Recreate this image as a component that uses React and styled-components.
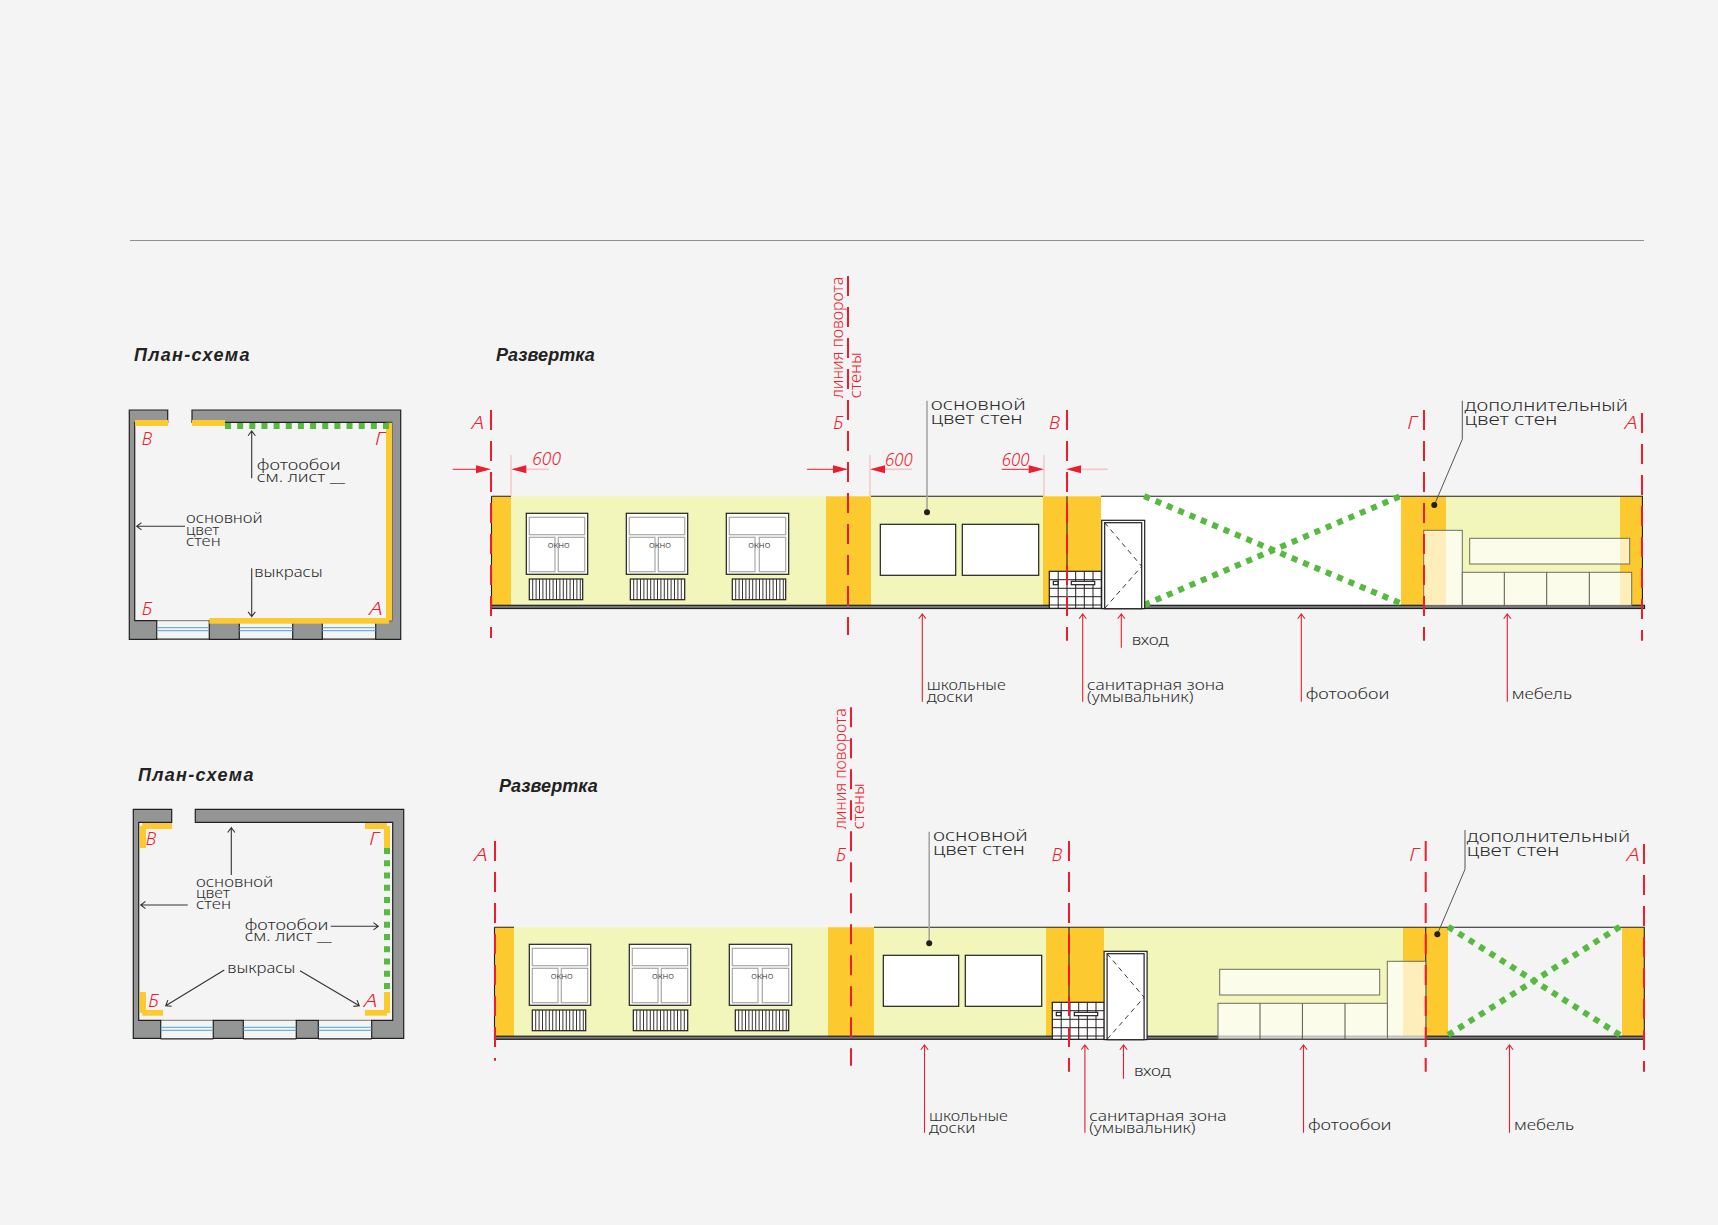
import styled, { createGlobalStyle } from "styled-components";

const RED = "#ed1c2e";
const ORANGE = "#fcc92e";
const PALE = "#f2f6bb";
const GREEN = "#55bb3f";
const WALL = "#939695";
const INK = "#231f20";
const PAPER = "#f4f4f4";

const GlobalStyle = createGlobalStyle`
  html, body {
    margin: 0;
    background: ${PAPER};
  }
`;

const Page = styled.div`
  width: 1718px;
  height: 1225px;
  overflow: hidden;
  padding-top: 240px;
  box-sizing: border-box;
  background: ${PAPER};
  font-family: "Noto Sans", "Liberation Sans", sans-serif;
`;

const Rule = styled.hr`
  height: 1px;
  margin: 0 74px 33px 130px;
  border: 0;
  background: #8f8f8f;
`;

const Row = styled.section`
  display: grid;
  grid-template-columns: 325px 1230px;
  height: 431px;
  padding-left: 125px;
`;

const PlanColumn = styled.div`
  display: flex;
  flex-direction: column;
  padding-top: ${(p) => p.$top}px;
`;

const Title = styled.h2`
  margin: 0;
  height: 22px;
  font-family: "Liberation Sans", "Noto Sans", sans-serif;
  font-size: 18px;
  line-height: 22px;
  font-weight: 700;
  font-style: italic;
  color: #222;
  white-space: nowrap;
`;

const PlanTitle = styled(Title)`
  padding-left: ${(p) => p.$left}px;
  margin-bottom: ${(p) => p.$gap}px;
  letter-spacing: 1.3px;
`;

const ElevationColumn = styled.div`
  display: grid;
`;

const ElevationTitle = styled(Title)`
  grid-area: 1 / 1;
  margin: 70px 0 0 ${(p) => p.$left}px;
  letter-spacing: 0.1px;
  z-index: 1;
`;

const Drawing = styled.svg`
  display: block;
  grid-area: 1 / 1;
  overflow: visible;
`;

const Note = styled.text`
  font-family: "Noto Sans", "Liberation Sans", sans-serif;
  font-weight: 300;
  font-size: ${(p) => p.$size || 15}px;
  fill: ${(p) => (p.$red ? RED : "#2b2b2b")};
`;

const Mark = styled.text`
  font-family: "Noto Sans", "Liberation Sans", sans-serif;
  font-style: italic;
  font-weight: 300;
  font-size: ${(p) => p.$size || 19}px;
  fill: ${RED};
`;

const SectionLine = styled.line`
  stroke: ${RED};
  stroke-width: 2;
  stroke-dasharray: 20 11;
`;

const Thin = styled.path`
  fill: none;
  stroke: ${(p) => p.$color || "#333"};
  stroke-width: ${(p) => p.$w || 1};
`;

const DashedThin = styled(Thin)`
  stroke-dasharray: 5 4;
`;

const Paint = styled.rect`
  fill: ${(p) => p.$fill};
`;

const Outlined = styled.rect`
  fill: ${(p) => p.$fill || "#fff"};
  stroke: ${(p) => p.$stroke || INK};
  stroke-width: ${(p) => p.$w || 1.2};
`;

const Furniture = styled.rect`
  fill: rgba(255, 255, 255, 0.68);
  stroke: #6f6f62;
  stroke-width: 1;
`;

const GreenDash = styled.line`
  stroke: ${GREEN};
  stroke-width: 6;
`;

const Dot = styled.circle`
  fill: ${INK};
`;

const Solid = styled.polygon`
  fill: ${RED};
`;

const Walls = styled.path`
  fill: ${WALL};
  stroke: ${INK};
  stroke-width: 1.2;
`;

const Glass = styled.path`
  fill: none;
  stroke: #4da3dc;
  stroke-width: 1;
`;

function Label({ x, y, w, size, red, children }) {
  return (
    <Note x={x} y={y} textLength={w} lengthAdjust="spacingAndGlyphs" $size={size} $red={red}>
      {children}
    </Note>
  );
}

function Letter({ x, y, w, children }) {
  return (
    <Mark x={x} y={y} textLength={w} lengthAdjust="spacingAndGlyphs">
      {children}
    </Mark>
  );
}

// line with an open head, tail -> tip
function Arrow({ x1, y1, x2, y2, color, head = 6 }) {
  const a = Math.atan2(y2 - y1, x2 - x1);
  const hx = (t) => x2 - head * Math.cos(a + t);
  const hy = (t) => y2 - head * Math.sin(a + t);
  const d = `M${x1} ${y1}L${x2} ${y2}M${hx(0.65)} ${hy(0.65)}L${x2} ${y2}L${hx(-0.65)} ${hy(-0.65)}`;
  return <Thin d={d} $color={color} $w={1.1} />;
}

// row of green squares, whole squares at both ends
function GreenRun({ x1, y1, x2, y2 }) {
  const len = Math.hypot(x2 - x1, y2 - y1);
  const step = len / Math.round(len / 12.3);
  const ux = (x2 - x1) / len;
  const uy = (y2 - y1) / len;
  return (
    <GreenDash
      x1={x1 - 3 * ux}
      y1={y1 - 3 * uy}
      x2={x2 + 3 * ux}
      y2={y2 + 3 * uy}
      strokeDasharray={`6 ${step - 6}`}
    />
  );
}

function Dim({ tip, base, y = 469.3, tail, pale }) {
  return (
    <>
      <Thin d={`M${base} ${y}L${tail} ${y}`} $color={pale ? "#f6c4c4" : RED} $w={pale ? 1.6 : 1} />
      <Solid points={`${tip},${y} ${base},${y - 4} ${base},${y + 4}`} />
    </>
  );
}

function Window({ x, w = 61.4, y = 513.3, rx, rw, lx }) {
  const bars = [];
  for (let b = rx + 3.4; b < rx + rw - 1; b += 3.4) bars.push(`M${b} ${y + 65.7}V${y + 86.4}`);
  return (
    <>
      <Outlined x={x} y={y} width={w} height={61} />
      <Outlined x={x + 3} y={y + 4} width={w - 6} height={17.4} $stroke="#a8a8a8" />
      <Outlined x={x + 3} y={y + 24} width={25.7} height={34.4} $stroke="#a8a8a8" />
      <Outlined x={x + w - 29.4} y={y + 24} width={26.4} height={34.4} $stroke="#a8a8a8" />
      <Label x={lx} y={y + 34.4} w={22} size={9.5}>
        окно
      </Label>
      <Outlined x={rx} y={y + 65.7} width={rw} height={20.7} />
      <Thin d={bars.join("")} $color={INK} $w={0.9} />
    </>
  );
}

function Door({ dx = 0, dy = 0 }) {
  const x = 1101.7 + dx;
  const y = 520.3 + dy;
  return (
    <>
      <Outlined x={x} y={y} width={43} height={88.3} />
      <Outlined x={x + 3} y={y + 2.4} width={37} height={86} />
      <DashedThin d={`M${x + 3} ${y + 2.4}L${x + 40} ${y + 46}L${x + 3} ${y + 88}`} $color={INK} $w={0.9} />
    </>
  );
}

function Washbasin({ dx = 0, dy = 0 }) {
  const x = 1049.3 + dx;
  const y = 571.3 + dy;
  const cols = [8.9, 17.7, 26.4, 35, 43.7].map((c) => `M${x + c} ${y}V${y + 37}`);
  const rows = [8.4, 17, 25.4, 33.7].map((r) => `M${x} ${y + r}H${x + 52}`);
  return (
    <>
      <Outlined x={x} y={y} width={52} height={37} />
      <Thin d={cols.join("") + rows.join("")} $color={INK} $w={1} />
      <Outlined x={x + 4} y={y + 10} width={4.7} height={3.4} />
      <Outlined x={x + 22} y={y + 10} width={23.4} height={3.4} />
    </>
  );
}

// notes and arrows common to both elevations, the second one sits a bit lower and to the right
function Callouts({ dx = 0, dy = 0 }) {
  return (
    <>
      <Thin d={`M${927 + dx} ${400.7 + dy}V${512.3 + dy}`} $color="#a5a5a5" $w={1.6} />
      <Dot cx={927 + dx} cy={512.3 + dy} r={3} />
      <Label x={930.7 + dx} y={410 + dy} w={95} size={17}>
        основной
      </Label>
      <Label x={930.7 + dx} y={424 + dy} w={92} size={17}>
        цвет стен
      </Label>
      <Arrow x1={922.3 + dx} y1={701.7 + dy} x2={922.3 + dx} y2={614 + dy} color={RED} />
      <Label x={926.7 + dx} y={690 + dy} w={79}>
        школьные
      </Label>
      <Label x={926.7 + dx} y={701.7 + dy} w={46.5}>
        доски
      </Label>
      <Arrow x1={1082.7 + dx} y1={701.7 + dy} x2={1082.7 + dx} y2={614 + dy} color={RED} />
      <Label x={1087 + dx} y={690 + dy} w={137.3}>
        санитарная зона
      </Label>
      <Label x={1087 + dx} y={701.7 + dy} w={106.3}>
        (умывальник)
      </Label>
      <Arrow x1={1121.3 + dx} y1={647.7 + dy} x2={1121.3 + dx} y2={614 + dy} color={RED} />
      <Label x={1131.7 + dx} y={645 + dy} w={37}>
        вход
      </Label>
      <Arrow x1={1301.3 + dx} y1={701.7 + dy} x2={1301.3 + dx} y2={614 + dy} color={RED} />
      <Label x={1305.7 + dx} y={699.3 + dy} w={83.6}>
        фотообои
      </Label>
      <Arrow x1={1507.3 + dx} y1={701.7 + dy} x2={1507.3 + dx} y2={614 + dy} color={RED} />
      <Label x={1511.7 + dx} y={699.3 + dy} w={60.3}>
        мебель
      </Label>
      <Label x={1464 + dx + 0.6} y={410.7 + dy} w={163.3} size={17}>
        дополнительный
      </Label>
      <Label x={1464 + dx + 0.6} y={424.7 + dy} w={92.7} size={17}>
        цвет стен
      </Label>
    </>
  );
}

function Windows({ dx = 0, dy = 0 }) {
  return (
    <>
      <Window x={526.3 + dx} y={513.3 + dy} rx={529.3 + dx} rw={53.4} lx={547.7 + dx} />
      <Window x={626.3 + dx} y={513.3 + dy} rx={630.3 + dx} rw={54.4} lx={649 + dx} />
      <Window x={726.3 + dx} w={62.4} y={513.3 + dy} rx={732.3 + dx} rw={53.4} lx={748.3 + dx} />
      <Outlined x={880.3 + dx} y={524.3 + dy} width={75.4} height={51} />
      <Outlined x={962.3 + dx} y={524.3 + dy} width={76.4} height={51} />
    </>
  );
}

function Furnishing({ tall, shelf, lower, top, bottom }) {
  return (
    <>
      <Furniture x={tall} y={top} width={38.6} height={bottom - top} />
      <Furniture x={shelf} y={top + 8} width={160} height={25.7} />
      <Furniture x={lower} y={top + 42} width={169.4} height={bottom - top - 42} />
      <Thin
        d={[42, 84.4, 127].map((s) => `M${lower + s} ${top + 42}V${bottom}`).join("")}
        $color="#55554c"
      />
    </>
  );
}

function WindowSlot({ x, w, y }) {
  return (
    <>
      <Thin d={`M${x} ${y}H${x + w}`} $color={INK} $w={0.6} />
      <Thin d={`M${x} ${y + 18.5}H${x + w}`} $color={INK} $w={1.2} />
      <Glass d={`M${x} ${y + 7}H${x + w}M${x} ${y + 10}H${x + w}`} />
    </>
  );
}

function FirstElevation() {
  const bands = [
    [492, 511, ORANGE],
    [511, 826, PALE],
    [826, 871, ORANGE],
    [871, 1043, PALE],
    [1043, 1101, ORANGE],
    [1101, 1401, "#fff"],
    [1401, 1446, ORANGE],
    [1446, 1620, PALE],
    [1620, 1642.4, ORANGE],
  ];
  return (
    <Drawing width="1230" height="431" viewBox="450 274 1230 431">
      {bands.map(([a, b, c]) => (
        <Paint key={a} x={a} y={496.3} width={b - a} height={109} $fill={c} />
      ))}
      <Thin d="M491.5 496.3H511M871 496.3H1043M1101 496.3H1642.4V605M491.5 496.3V605M1067 496.3V605" $color={INK} $w={1.1} />
      <Outlined x={491.5} y={605.3} width={1153} height={3.2} $fill="#76787a" />
      <Windows />
      <Washbasin />
      <GreenRun x1={1147} y1={497.3} x2={1396.7} y2={601.7} />
      <GreenRun x1={1147} y1={603.7} x2={1396.7} y2={497.7} />
      <Door />
      <Furnishing tall={1423.7} shelf={1469.7} lower={1462.3} top={530.3} bottom={605.5} />

      <SectionLine x1={491} y1={410} x2={491} y2={638} />
      <SectionLine x1={848} y1={276} x2={848} y2={635} />
      <SectionLine x1={1067} y1={410} x2={1067} y2={640.7} />
      <SectionLine x1={1424} y1={410} x2={1424} y2={640.7} />
      <SectionLine x1={1642} y1={413} x2={1642} y2={640.7} />

      <Letter x={471.7} y={429.3} w={12.5}>А</Letter>
      <Letter x={833.3} y={429.3} w={10}>Б</Letter>
      <Letter x={1049} y={429.3} w={11}>В</Letter>
      <Letter x={1407.3} y={429.3} w={10}>Г</Letter>
      <Letter x={1624.7} y={429.3} w={13}>А</Letter>

      <Note x={0} y={0} $size={16} $red textLength={121.6} lengthAdjust="spacingAndGlyphs" transform="translate(842.7 398.3) rotate(-90)">
        линия поворота
      </Note>
      <Note x={0} y={0} $size={16} $red textLength={46} lengthAdjust="spacingAndGlyphs" transform="translate(860.7 398.3) rotate(-90)">
        стены
      </Note>

      <Thin d="M511 455V496M870 455V496M1044 455V496" $color="#f5bcbc" $w={1.2} />
      <Dim tip={491} base={476} tail={452.7} />
      <Dim tip={511.3} base={526.3} tail={549} pale />
      <Dim tip={848} base={833} tail={807} />
      <Dim tip={870} base={885} tail={912} pale />
      <Dim tip={1044} base={1028.7} tail={1001.7} />
      <Dim tip={1066} base={1081} tail={1107.7} pale />
      <Letter x={532.3} y={464.5} w={28.7}>600</Letter>
      <Letter x={885} y={466} w={27.7}>600</Letter>
      <Letter x={1001.7} y={466} w={28}>600</Letter>

      <Callouts />
      <Thin d="M1462.3 400.7V439.3L1434.3 505" $color="#555" />
      <Dot cx={1434.3} cy={505} r={3} />
    </Drawing>
  );
}

function SecondElevation() {
  const bands = [
    [495, 514, ORANGE],
    [514, 828, PALE],
    [828, 874, ORANGE],
    [874, 1046, PALE],
    [1046, 1104, ORANGE],
    [1104, 1403, PALE],
    [1403, 1448, ORANGE],
    [1622, 1644.3, ORANGE],
  ];
  return (
    <Drawing width="1230" height="431" viewBox="450 705 1230 431">
      {bands.map(([a, b, c]) => (
        <Paint key={a} x={a} y={927.3} width={b - a} height={109} $fill={c} />
      ))}
      <Thin d="M494.5 927.3H514M874 927.3H1046M1046 927.3H1644.3V1036M494.5 927.3V1036M1069 927.3V1036M1425.7 927.3V1036" $color={INK} $w={1.1} />
      <Outlined x={494.5} y={1036.2} width={1149.5} height={3.1} $fill="#76787a" />
      <Windows dx={3} dy={431} />
      <Washbasin dx={3} dy={431} />
      <GreenRun x1={1450.7} y1={928.3} x2={1617.3} y2={1033.3} />
      <GreenRun x1={1450.7} y1={1033.3} x2={1617.3} y2={928.3} />
      <Door dx={2.4} dy={431} />
      <Furnishing tall={1387.3} shelf={1219.7} lower={1218} top={961.3} bottom={1039} />

      <SectionLine x1={495} y1={841} x2={495} y2={1060.7} />
      <SectionLine x1={851} y1={707.3} x2={851} y2={1065.7} />
      <SectionLine x1={1069} y1={841} x2={1069} y2={1071.7} />
      <SectionLine x1={1425.7} y1={841} x2={1425.7} y2={1071.7} />
      <SectionLine x1={1644} y1={844} x2={1644} y2={1071.7} />

      <Letter x={474.3} y={860.7} w={13.5}>А</Letter>
      <Letter x={836} y={860.7} w={10}>Б</Letter>
      <Letter x={1051.7} y={860.7} w={10.5}>В</Letter>
      <Letter x={1409.3} y={860.7} w={10}>Г</Letter>
      <Letter x={1626.7} y={860.7} w={13}>А</Letter>

      <Note x={0} y={0} $size={16} $red textLength={121} lengthAdjust="spacingAndGlyphs" transform="translate(845.7 829.3) rotate(-90)">
        линия поворота
      </Note>
      <Note x={0} y={0} $size={16} $red textLength={46} lengthAdjust="spacingAndGlyphs" transform="translate(863.7 829.3) rotate(-90)">
        стены
      </Note>

      <Callouts dx={2.2} dy={431} />
      <Thin d="M1465 830V869.3L1437.3 934.3" $color="#555" />
      <Dot cx={1437.3} cy={934.3} r={3} />
    </Drawing>
  );
}

function FirstPlan() {
  const walls =
    "M129.3 410H167.7V422.3H134.7V620.7H156.7V639.3H129.3Z" +
    "M192 410H400.7V639.3H375.7V620.7H391.7V422.3H192Z" +
    "M209.3 620.7H239.3V639.3H209.3Z" +
    "M292.7 620.7H322.3V639.3H292.7Z";
  return (
    <Drawing width="290" height="245" viewBox="125 405 290 245">
      <Walls d={walls} />
      <WindowSlot x={156.7} w={52.6} y={620.7} />
      <WindowSlot x={239.3} w={53.4} y={620.7} />
      <WindowSlot x={322.3} w={53.4} y={620.7} />
      <Paint x={135} y={420} width={33} height={6} $fill={ORANGE} />
      <Paint x={192} y={420} width={33} height={6} $fill={ORANGE} />
      <Paint x={386} y={422.7} width={6} height={198} $fill={ORANGE} />
      <Paint x={209.3} y={618} width={179.7} height={5.7} $fill={ORANGE} />
      <GreenRun x1={228} y1={426} x2={386} y2={426} />

      <Letter x={141.7} y={445} w={10.5}>В</Letter>
      <Letter x={375} y={445} w={10}>Г</Letter>
      <Letter x={141.7} y={615} w={10.5}>Б</Letter>
      <Letter x={369.3} y={615} w={13.5}>А</Letter>

      <Arrow x1={251.7} y1={478.3} x2={251.7} y2={431} />
      <Label x={256.7} y={470} w={84}>фотообои</Label>
      <Label x={256.7} y={481.7} w={88.3}>см. лист __</Label>
      <Arrow x1={185} y1={526.3} x2={136.7} y2={526.3} />
      <Label x={186} y={523.3} w={76.7}>основной</Label>
      <Label x={186} y={534.5} w={33.3}>цвет</Label>
      <Label x={186} y={546} w={34.7}>стен</Label>
      <Arrow x1={251.7} y1={568.3} x2={251.7} y2={616.7} />
      <Label x={254.3} y={576.7} w={68.4}>выкрасы</Label>
    </Drawing>
  );
}

function SecondPlan() {
  const walls =
    "M133.3 809.3H171.7V822.3H138.7V1020.3H160.7V1038.3H133.3Z" +
    "M195.3 809.3H403.7V1038.3H371.7V1020.3H392.7V822.3H195.3Z" +
    "M213.3 1020.3H243.3V1038.3H213.3Z" +
    "M296.3 1020.3H318.3V1038.3H296.3Z";
  return (
    <Drawing width="290" height="245" viewBox="125 804 290 245">
      <Walls d={walls} />
      <WindowSlot x={160.7} w={52.6} y={1020.3} />
      <WindowSlot x={243.3} w={53} y={1020.3} />
      <WindowSlot x={318.3} w={53.4} y={1020.3} />
      <Paint x={142.3} y={823} width={29.7} height={6} $fill={ORANGE} />
      <Paint x={140} y={826} width={6} height={22} $fill={ORANGE} />
      <Paint x={365} y={823} width={22} height={6} $fill={ORANGE} />
      <Paint x={384} y={826} width={6} height={22} $fill={ORANGE} />
      <Paint x={140} y={992} width={6} height={21} $fill={ORANGE} />
      <Paint x={142.3} y={1010} width={20.7} height={5.7} $fill={ORANGE} />
      <Paint x={384} y={992} width={6} height={21} $fill={ORANGE} />
      <Paint x={365} y={1010} width={22} height={5.7} $fill={ORANGE} />
      <GreenRun x1={387} y1={851} x2={387} y2={986} />

      <Letter x={145.7} y={845} w={10.5}>В</Letter>
      <Letter x={369.3} y={845} w={10}>Г</Letter>
      <Letter x={148.3} y={1007.3} w={10.5}>Б</Letter>
      <Letter x={364} y={1007.3} w={13.5}>А</Letter>

      <Arrow x1={231.3} y1={875} x2={231.3} y2={827.7} />
      <Label x={196} y={886.7} w={77.3}>основной</Label>
      <Label x={196} y={898} w={34}>цвет</Label>
      <Label x={196} y={909.3} w={35}>стен</Label>
      <Arrow x1={187.7} y1={905} x2={140.7} y2={905} />
      <Label x={244.7} y={930.3} w={83.6}>фотообои</Label>
      <Label x={244.7} y={941.3} w={87}>см. лист __</Label>
      <Arrow x1={330.7} y1={926.3} x2={378.3} y2={926.3} />
      <Label x={227.3} y={972.7} w={68}>выкрасы</Label>
      <Arrow x1={224.3} y1={970} x2={165.7} y2={1005.7} />
      <Arrow x1={300} y1={970.7} x2={359.3} y2={1005.7} />
    </Drawing>
  );
}

export default function App() {
  return (
    <Page>
      <GlobalStyle />
      <Rule />
      <Row>
        <PlanColumn $top={70}>
          <PlanTitle $left={9} $gap={39}>План-схема</PlanTitle>
          <FirstPlan />
        </PlanColumn>
        <ElevationColumn>
          <ElevationTitle $left={46}>Развертка</ElevationTitle>
          <FirstElevation />
        </ElevationColumn>
      </Row>
      <Row>
        <PlanColumn $top={59}>
          <PlanTitle $left={13} $gap={18}>План-схема</PlanTitle>
          <SecondPlan />
        </PlanColumn>
        <ElevationColumn>
          <ElevationTitle $left={49}>Развертка</ElevationTitle>
          <SecondElevation />
        </ElevationColumn>
      </Row>
    </Page>
  );
}
